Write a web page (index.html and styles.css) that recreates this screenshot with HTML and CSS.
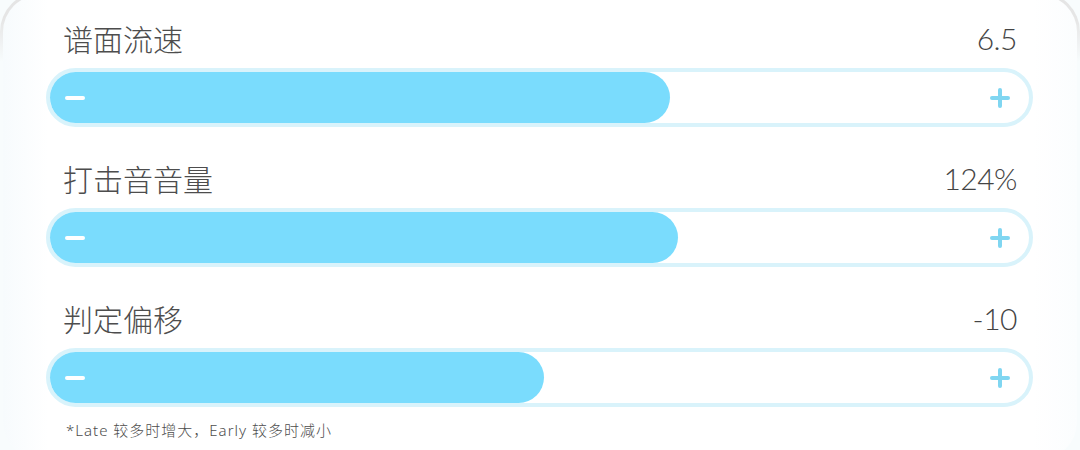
FILE: index.html
```html
<!DOCTYPE html>
<html lang="zh-CN">
<head>
    <meta charset="UTF-8">
    <meta name="viewport" content="width=device-width, initial-scale=1.0">
    <title>游戏设置</title>
    <link rel="stylesheet" href="styles.css">
</head>
<body>
    <div class="panel">
        <div class="setting">
            <div class="setting-head">
                <span class="label">谱面流速</span>
                <span class="value">6.5</span>
            </div>
            <div class="track">
                <div class="fill" style="width: 63.3%"></div>
                <div class="controls">
                    <svg class="icon minus" width="20" height="20" viewBox="0 0 20 20"><line x1="2" y1="10" x2="18" y2="10"/></svg>
                    <svg class="icon plus" width="20" height="20" viewBox="0 0 20 20"><line x1="2" y1="10" x2="18" y2="10"/><line x1="10" y1="2" x2="10" y2="18"/></svg>
                </div>
            </div>
        </div>

        <div class="setting">
            <div class="setting-head">
                <span class="label">打击音音量</span>
                <span class="value">124%</span>
            </div>
            <div class="track">
                <div class="fill" style="width: 64.1%"></div>
                <div class="controls">
                    <svg class="icon minus" width="20" height="20" viewBox="0 0 20 20"><line x1="2" y1="10" x2="18" y2="10"/></svg>
                    <svg class="icon plus" width="20" height="20" viewBox="0 0 20 20"><line x1="2" y1="10" x2="18" y2="10"/><line x1="10" y1="2" x2="10" y2="18"/></svg>
                </div>
            </div>
        </div>

        <div class="setting">
            <div class="setting-head">
                <span class="label">判定偏移</span>
                <span class="value">-10</span>
            </div>
            <div class="track">
                <div class="fill" style="width: 50.5%"></div>
                <div class="controls">
                    <svg class="icon minus" width="20" height="20" viewBox="0 0 20 20"><line x1="2" y1="10" x2="18" y2="10"/></svg>
                    <svg class="icon plus" width="20" height="20" viewBox="0 0 20 20"><line x1="2" y1="10" x2="18" y2="10"/><line x1="10" y1="2" x2="10" y2="18"/></svg>
                </div>
            </div>
        </div>

        <p class="note">*Late 较多时增大，Early 较多时减小</p>
    </div>
</body>
</html>
```

FILE: styles.css
```css
/* Settings panel */
body {
    margin: 0;
    padding: 0;
    background-color: #f8fcfd;
    overflow: hidden;
    font-family: "Noto Sans CJK SC", "Noto Sans", sans-serif;
    color: #4a4a4a;
}

.panel {
    margin-top: -8px;
    height: 470px;
    box-sizing: border-box;
    border: 3px solid transparent;
    border-radius: 40px;
    background:
        linear-gradient(to right, #f7fbfd 0, #ffffff 45px, #ffffff 1030px, #fbfdfe 100%) padding-box,
        linear-gradient(to bottom, #e4e4e4 0, #e6e6e6 28px, #f8fcfd 70px) border-box;
    padding: 23px 44px 0 43px;
}

.setting {
    margin-bottom: 31px;
}

.setting-head {
    display: flex;
    justify-content: space-between;
    align-items: center;
    height: 40px;
    margin-bottom: 10px;
    padding: 0 16px 0 17px;
}

.label {
    font-size: 30px;
    font-weight: 300;
    line-height: 40px;
    color: #4d4d4d;
}

.value {
    font-family: Lato, "Noto Sans", sans-serif;
    font-weight: 300;
    font-size: 30px;
    line-height: 40px;
    color: #444;
    letter-spacing: -0.5px;
}

.track {
    display: grid;
    height: 51px;
    border: 4px solid #d9f3fb;
    border-radius: 30px;
    background-color: #ffffff;
}

.fill {
    grid-area: 1 / 1;
    height: 100%;
    background-color: #7adcfd;
    border-radius: 26px;
}

.controls {
    grid-area: 1 / 1;
    display: flex;
    justify-content: space-between;
    align-items: center;
    padding: 0 19px 0 15px;
}

.icon line {
    stroke-width: 4;
    stroke-linecap: round;
}

.minus line { stroke: #ffffff; }
.plus line { stroke: #80d6f1; }

.note {
    margin: -18px 0 0 20px;
    font-family: "Noto Sans", "Noto Sans CJK SC", sans-serif;
    font-weight: 300;
    font-size: 15px;
    line-height: 20px;
    letter-spacing: 1px;
    color: #4d4d4d;
}
```
